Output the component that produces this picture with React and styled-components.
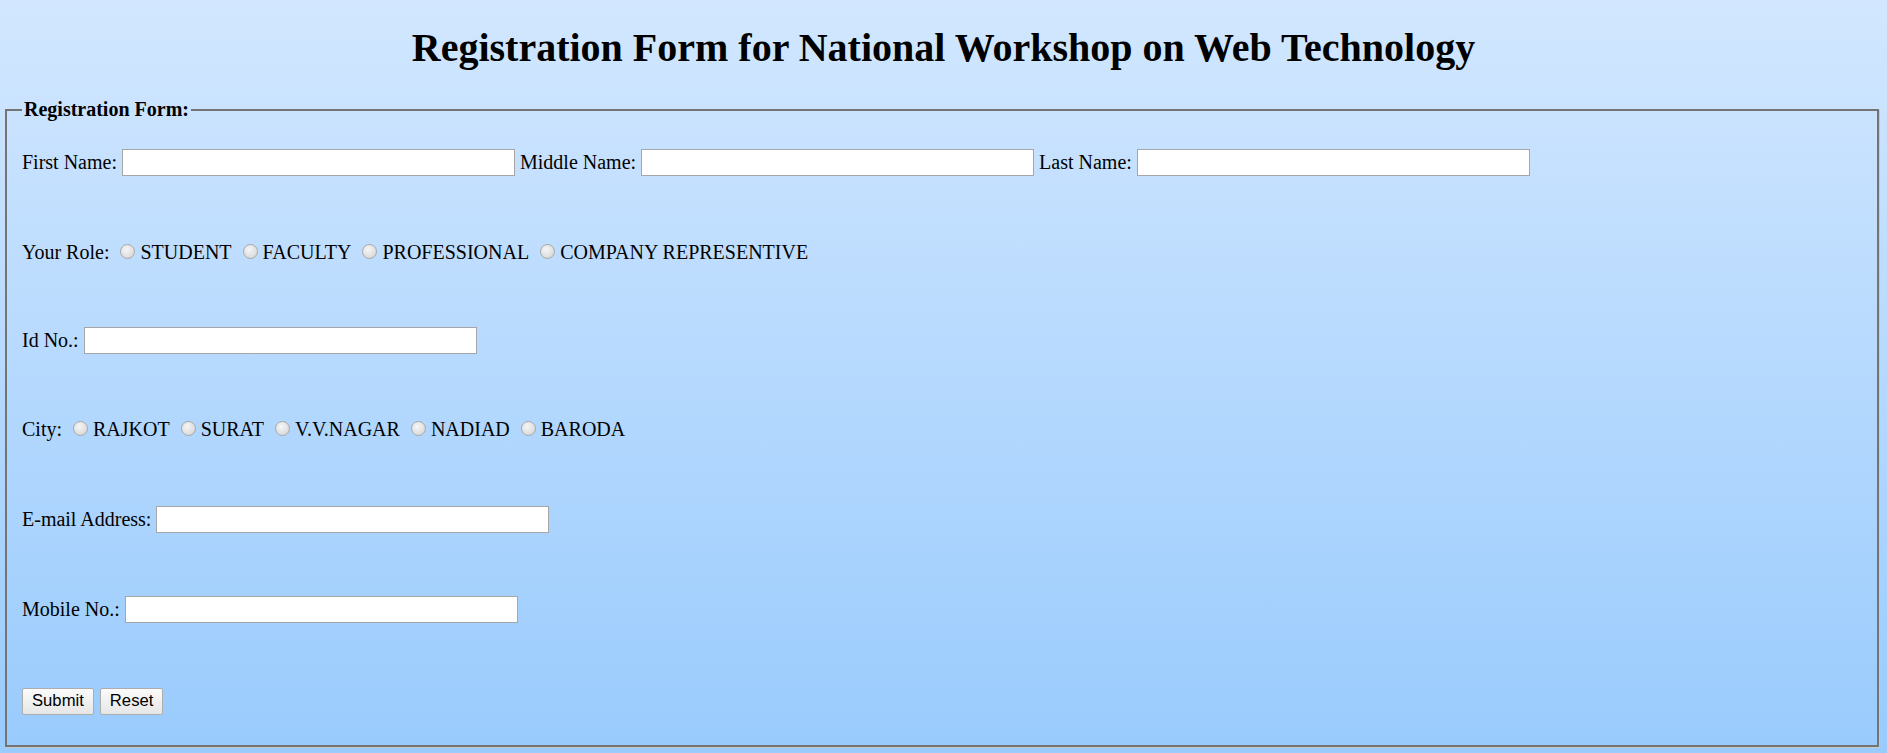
import React from "react";
import styled, { createGlobalStyle } from "styled-components";

const GlobalStyle = createGlobalStyle`
  html {
    height: 100%;
  }
  body {
    margin: 0;
    min-height: 100%;
    background: linear-gradient(to bottom, #d2e7ff, #99cbfd);
    font-family: "Liberation Serif", "Times New Roman", serif;
    font-size: 20px;
    color: #000;
  }
`;

const roles = ["STUDENT", "FACULTY", "PROFESSIONAL", "COMPANY REPRESENTIVE"];
const cities = ["RAJKOT", "SURAT", "V.V.NAGAR", "NADIAD", "BARODA"];

function App() {
  return (
    <>
      <GlobalStyle />
      <Title>Registration Form for National Workshop on Web Technology</Title>
      <FormBox>
        <Legend>Registration Form:</Legend>
        <Row $space={0}>
          <Label>First Name:</Label>
          <TextInput type="text" />
          <Label>Middle Name:</Label>
          <TextInput type="text" />
          <Label>Last Name:</Label>
          <TextInput type="text" />
        </Row>
        <Row $space={62}>
          <Label>Your Role:</Label>
          {roles.map((r) => (
            <Choice key={r}>
              <Radio type="radio" name="role" />
              {r}
            </Choice>
          ))}
        </Row>
        <Row $space={60}>
          <Label>Id No.:</Label>
          <TextInput type="text" />
        </Row>
        <Row $space={61}>
          <Label>City:</Label>
          {cities.map((c) => (
            <Choice key={c}>
              <Radio type="radio" name="city" />
              {c}
            </Choice>
          ))}
        </Row>
        <Row $space={62}>
          <Label>E-mail Address:</Label>
          <TextInput type="email" />
        </Row>
        <Row $space={62}>
          <Label>Mobile No.:</Label>
          <TextInput type="text" />
        </Row>
        <Row $space={64}>
          <Button type="submit">Submit</Button>
          <Button type="reset">Reset</Button>
        </Row>
      </FormBox>
    </>
  );
}

export default App;

const Title = styled.h1`
  margin: 0;
  padding: 25px 0 27px;
  height: 46px;
  line-height: 46px;
  text-align: center;
  font-size: 40px;
  font-weight: bold;
`;

const FormBox = styled.fieldset`
  margin: 0 8px 0 5px;
  padding: 27px 15px 30px;
  border: 2px solid #747474;
  box-shadow: 1px 1px 0 #c8c8c8;
  min-width: 0;
`;

const Legend = styled.legend`
  padding: 0 2px;
  font-size: 20px;
  line-height: 23px;
  font-weight: bold;
`;

const Row = styled.div`
  display: flex;
  align-items: center;
  height: 28px;
  margin-top: ${(p) => p.$space}px;
  white-space: nowrap;
`;

const Label = styled.span`
  margin-right: 5px;
  line-height: 23px;
`;

const TextInput = styled.input`
  box-sizing: border-box;
  width: 393px;
  height: 27px;
  margin: 0 5px 0 0;
  padding: 1px 3px;
  border: 1px solid #a6a6a6;
  background: #fff;
  font-family: "Liberation Sans", Arial, sans-serif;
  font-size: 16.67px;
`;

const Choice = styled.label`
  display: flex;
  align-items: center;
  margin-left: 6px;
  line-height: 23px;

  & + & {
    margin-left: 11px;
  }
`;

const Radio = styled.input`
  appearance: none;
  box-sizing: border-box;
  width: 15px;
  height: 15px;
  margin: 0 5px 0 0;
  position: relative;
  top: -1px;
  border: 1px solid #a8a8a8;
  border-radius: 50%;
  background: radial-gradient(circle at 40% 35%, #f6f6f6 0%, #e2e2e2 55%, #cfcfcf 100%);
`;

const Button = styled.button`
  box-sizing: border-box;
  height: 27px;
  margin: 0 6px 0 0;
  padding: 0 9px;
  border: 1px solid #adadad;
  border-radius: 2px;
  background: linear-gradient(to bottom, #fbfbfb, #e6e6e6);
  font-family: "Liberation Sans", Arial, sans-serif;
  font-size: 16.67px;
  color: #000;
`;
